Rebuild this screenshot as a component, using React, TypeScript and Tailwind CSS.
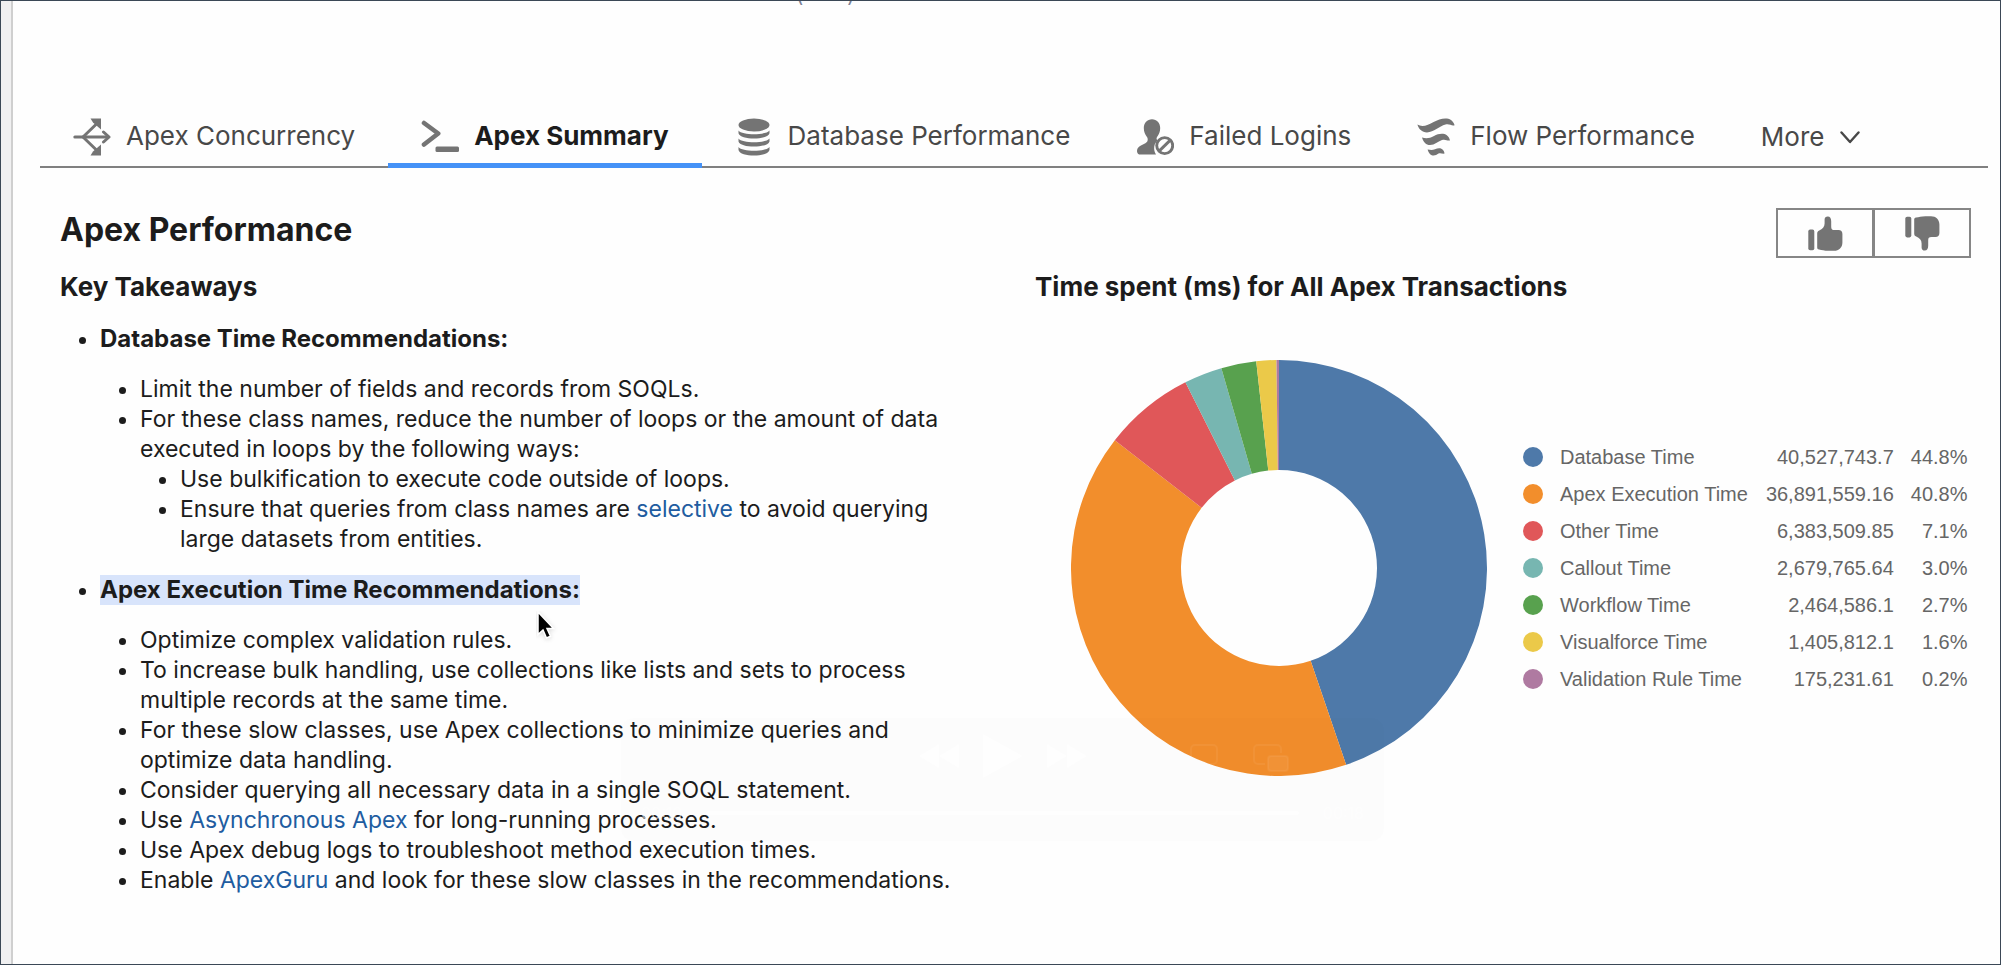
import type { ReactNode } from "react";

const ICON = "mt-[3px] h-[38px] w-[38px] shrink-0 text-[#747474]";

function ConcurrencyIcon() {
  return (
    <svg className={ICON} viewBox="0 0 38 38" fill="none" stroke="currentColor" strokeWidth="3" aria-hidden="true">
      <path d="M1.8 19H35" strokeLinecap="round" />
      <path d="M30.500 14L36 19L30.500 24" strokeLinecap="round" strokeLinejoin="round" />
      <path d="M10 19L25 4.500M10 19L25 33.500" />
      <path d="M17.500 0.500H28V11.500L24 8L20 4.500Z" fill="currentColor" stroke="none" />
      <path d="M17.500 37.500H28V26.500L24 30L20 33.500Z" fill="currentColor" stroke="none" />
    </svg>
  );
}

function SummaryIcon() {
  return (
    <svg className={ICON} viewBox="0 0 38 38" fill="none" stroke="currentColor" aria-hidden="true">
      <path d="M3 5L17.200 15.500L3 26.500" strokeWidth="4.600" strokeLinecap="round" strokeLinejoin="round" />
      <rect x="14.500" y="28.500" width="23.500" height="5.500" rx="1.500" fill="currentColor" stroke="none" />
    </svg>
  );
}

function DatabaseIcon() {
  return (
    <svg className={ICON} viewBox="0 0 38 38" fill="currentColor" aria-hidden="true">
      <ellipse cx="19" cy="7" rx="15.5" ry="6.4" />
      <path d="M3.500 12.400C7 17.400 31 17.400 34.500 12.400V15.200C33 22.200 5 22.200 3.500 15.200Z" />
      <path d="M3.500 20.600C7 25.600 31 25.600 34.500 20.600V23.400C33 30.200 5 30.200 3.500 23.400Z" />
      <path d="M3.500 29C7 34 31 34 34.500 29V32C33 39.400 5 39.400 3.500 32Z" />
    </svg>
  );
}

function FailedLoginsIcon() {
  return (
    <svg className={ICON} viewBox="0 0 38 38" fill="currentColor" aria-hidden="true">
      <path d="M16 1.2C20.8 1.2 24.2 5 24.2 10C24.2 13.8 22.8 16.6 21.2 18.8C20.2 20.2 20.4 21.6 21.6 22.4C18 25.4 16.8 31 20 36.6H4.5C2.4 36.6 1 35.2 1 33.2C1 28.6 5.4 27.2 9.4 25.2C12 24 12.4 20.8 10.8 18.8C9.2 16.6 7.8 13.8 7.8 10C7.8 5 11.2 1.2 16 1.2Z" />
      <circle cx="28.7" cy="27.6" r="8" fill="none" stroke="currentColor" strokeWidth="2.9" />
      <path d="M23.6 32.6L33.8 22.6" stroke="currentColor" strokeWidth="2.9" />
    </svg>
  );
}

function FlowIcon() {
  return (
    <svg className={ICON} viewBox="0 0 38 38" fill="currentColor" aria-hidden="true">
      <path d="M.4 6.600C5 9.400 11 7.400 16.600 4C24.400-.6 35-2 37.600 7.200C34.600 8.200 32.500 5.600 28.500 6.600C22 8.200 17 14.400 10 14.400C5 14.400 1.500 11 .4 6.600Z" />
      <path d="M5 19.400C9 20.800 12.500 20.400 17 18C23 14.800 31 14.400 33 22.400C30 23 28.500 20.800 25 22C20.500 23.600 18 27 13 27C9 27 6.500 24 5 19.400Z" />
      <path d="M10.600 31.400C13.500 32 15.500 32.200 18 31.200C22 29.600 26.500 29.600 27.600 35.600C25 36 23.500 34.600 21.500 35.600C17.500 38.600 12.600 38.600 10.600 31.400Z" />
    </svg>
  );
}

function ThumbIcon({ down = false }: { down?: boolean }) {
  return (
    <svg
      className={down ? "h-[35px] w-[35px] -scale-y-100 text-[#747474]" : "h-[35px] w-[35px] text-[#747474]"}
      viewBox="0 0 35 35"
      fill="currentColor"
      aria-hidden="true"
    >
      <rect x="0.300" y="13.600" width="6" height="20.600" rx="1.800" />
      <path d="M9.200 17.500C9.200 16 9.800 15 11.200 14.400C14.500 13 16.600 11 16.600 7.500V3.600C16.600 1.600 17.800.4 19.800.4C22 .4 23.200 2.400 23.200 5.200V10.400C23.200 13.200 24 14 26.500 14H30.500C33 14 34.400 15.600 34.400 18V26.500C34.400 31.500 31 34.800 26 34.800H20.500C16 34.800 14 33.800 11 33.400C9.800 33.200 9.200 32.600 9.200 31.400Z" />
    </svg>
  );
}

const tabs: { label: string; icon: ReactNode; active?: boolean }[] = [
  { label: "Apex Concurrency", icon: <ConcurrencyIcon /> },
  { label: "Apex Summary", icon: <SummaryIcon />, active: true },
  { label: "Database Performance", icon: <DatabaseIcon /> },
  { label: "Failed Logins", icon: <FailedLoginsIcon /> },
  { label: "Flow Performance", icon: <FlowIcon /> },
];

const slices = [
  { name: "Database Time", value: 40527743.7, text: "40,527,743.7", pct: "44.8%", color: "#4e79a9" },
  { name: "Apex Execution Time", value: 36891559.16, text: "36,891,559.16", pct: "40.8%", color: "#f28e2c" },
  { name: "Other Time", value: 6383509.85, text: "6,383,509.85", pct: "7.1%", color: "#e05759" },
  { name: "Callout Time", value: 2679765.64, text: "2,679,765.64", pct: "3.0%", color: "#77b6b1" },
  { name: "Workflow Time", value: 2464586.1, text: "2,464,586.1", pct: "2.7%", color: "#58a14e" },
  { name: "Visualforce Time", value: 1405812.1, text: "1,405,812.1", pct: "1.6%", color: "#ebc949" },
  { name: "Validation Rule Time", value: 175231.61, text: "175,231.61", pct: "0.2%", color: "#af7aa1" },
];

function Donut() {
  const total = slices.reduce((sum, s) => sum + s.value, 0);
  const c = 208;
  const outer = 208;
  const inner = 98;
  const point = (r: number, turn: number) => {
    const a = turn * 2 * Math.PI;
    return `${(c + r * Math.sin(a)).toFixed(2)} ${(c - r * Math.cos(a)).toFixed(2)}`;
  };
  let start = 0;
  return (
    <svg className="h-[416px] w-[416px] shrink-0" viewBox="0 0 416 416" role="img" aria-label="Time spent by category">
      {slices.map((s) => {
        const from = start;
        const to = start + s.value / total;
        start = to;
        const large = to - from > 0.5 ? 1 : 0;
        return (
          <path
            key={s.name}
            fill={s.color}
            d={`M${point(outer, from)}A${outer} ${outer} 0 ${large} 1 ${point(outer, to)}L${point(inner, to)}A${inner} ${inner} 0 ${large} 0 ${point(inner, from)}Z`}
          />
        );
      })}
    </svg>
  );
}

function Legend() {
  return (
    <table className="font-['Liberation_Sans',Arial,sans-serif] text-[20px] leading-[37px] whitespace-nowrap text-[#666]">
      <tbody>
        {slices.map((s) => (
          <tr key={s.name}>
            <td className="p-0 pr-[17px]">
              <span className="block h-5 w-5 rounded-full" style={{ backgroundColor: s.color }} />
            </td>
            <th scope="row" className="p-0 text-left font-normal">{s.name}</th>
            <td className="p-0 pl-[18px] text-right">{s.text}</td>
            <td className="p-0 pl-[17px] text-right">{s.pct}</td>
          </tr>
        ))}
      </tbody>
    </table>
  );
}

function TextLink({ children }: { children: ReactNode }) {
  return (
    <a href="#" className="text-[#215ca0]">
      {children}
    </a>
  );
}

function PlayerOverlay() {
  return (
    <div className="pointer-events-none absolute top-[717px] left-[620px] flex h-[123px] w-[763px] flex-col justify-between rounded-xl bg-black/[0.008] px-5 pt-4 pb-4 text-white/60" aria-hidden="true">
      <div className="flex items-center justify-center gap-6">
        <svg className="h-6 w-10" viewBox="0 0 40 24" fill="currentColor"><path d="M20 0V24L0 12ZM40 0V24L20 12Z" /></svg>
        <svg className="h-11 w-10" viewBox="0 0 40 44" fill="currentColor"><path d="M0 0L40 22L0 44Z" /></svg>
        <svg className="h-6 w-10" viewBox="0 0 40 24" fill="currentColor"><path d="M0 0V24L20 12ZM20 0V24L40 12Z" /></svg>
      </div>
      <div className="flex items-center gap-6 text-base">
        <span>00:10</span>
        <span className="h-1 flex-1 rounded bg-white/60" />
        <span>00:18</span>
      </div>
      <svg className="absolute top-[26px] left-[632px] h-7 w-9 text-white/5" viewBox="0 0 36 28" fill="none" stroke="currentColor" strokeWidth="2">
        <path d="M12 20H5A4 4 0 0 1 1 16V5A4 4 0 0 1 5 1H24A4 4 0 0 1 28 5V9" />
        <rect x="15" y="12" width="20" height="15" rx="3" fill="currentColor" />
      </svg>
      <svg className="absolute top-[26px] left-[569px] h-7 w-7 text-white/5" viewBox="0 0 28 28" fill="none" stroke="currentColor" strokeWidth="2">
        <path d="M9 20H5A4 4 0 0 1 1 16V5A4 4 0 0 1 5 1H23A4 4 0 0 1 27 5V16A4 4 0 0 1 23 20H19M14 18L7 26H21Z" />
      </svg>
    </div>
  );
}

export default function App() {
  return (
    <div className="relative flex min-h-screen overflow-hidden border border-[#3b4856] bg-[#fefefe] font-[Inter,sans-serif] text-[#1c1c1c]">
      <div className="w-3 shrink-0 border-r-2 border-[#cfcfcf] bg-[#f0f0f1]" />
      <main className="min-w-0 flex-1 pr-3 pl-[27px]">
        <div className="flex h-1 items-end gap-11 overflow-hidden pl-[756px] text-[20px] leading-none text-[#7b8296]">
          <span>(</span>
          <span>)</span>
        </div>
        <nav className="mt-[98px] flex h-[65px] border-b-2 border-[#808080]" role="tablist">
          {tabs.map((t) => (
            <button
              key={t.label}
              type="button"
              role="tab"
              aria-selected={!!t.active}
              className={
                t.active
                  ? "-mb-[2px] flex items-center gap-[15px] border-b-[5px] border-[#4592f7] px-[33px] pt-3 pb-[7px] text-[26px] font-bold whitespace-nowrap text-[#1c1c1c]"
                  : "-mb-[2px] flex items-center gap-[15px] px-[33px] pt-3 pb-3 text-[26px] whitespace-nowrap text-[#484848]"
              }
            >
              {t.icon}
              {t.label}
            </button>
          ))}
          <button type="button" className="flex items-center gap-4 px-[33px] pt-[10px] pb-[6px] text-[26px] text-[#484848]">
            More
            <svg className="h-5 w-5" viewBox="0 0 20 20" fill="none" stroke="currentColor" strokeWidth="2.4" strokeLinecap="round" strokeLinejoin="round" aria-hidden="true">
              <path d="M1.500 5.500L10 15L18.500 5.500" />
            </svg>
          </button>
        </nav>

        <div className="pr-[17px] pl-5">
          <header className="flex h-[101px] items-start justify-between pt-10">
            <h1 className="text-[32px] leading-[44px] font-bold">Apex Performance</h1>
            <div className="flex">
              <button type="button" aria-label="Helpful" className="flex h-[50px] w-[98px] items-center justify-center border-2 border-[#868686]">
                <ThumbIcon />
              </button>
              <button type="button" aria-label="Not helpful" className="-ml-px flex h-[50px] w-[98px] items-center justify-center border-2 border-[#868686]">
                <ThumbIcon down />
              </button>
            </div>
          </header>

          <div className="grid grid-cols-[975fr_936fr]">
            <section className="pr-14">
              <h2 className="text-[26px] leading-9 font-bold">Key Takeaways</h2>
              <ul className="mt-[19px] list-disc pl-10 text-[23px] leading-[30px]">
                <li>
                  <strong className="text-[24px]">Database Time Recommendations:</strong>
                  <ul className="mt-5 list-disc pl-10">
                    <li>Limit the number of fields and records from SOQLs.</li>
                    <li>
                      For these class names, reduce the number of loops or the amount of data executed in loops by the following ways:
                      <ul className="list-disc pl-10">
                        <li>Use bulkification to execute code outside of loops.</li>
                        <li>
                          Ensure that queries from class names are <TextLink>selective</TextLink> to avoid querying large datasets from entities.
                        </li>
                      </ul>
                    </li>
                  </ul>
                </li>
                <li className="relative mt-[21px]">
                  <strong className="inline-block bg-[#d8e4fb] text-[24px]">Apex Execution Time Recommendations:</strong>
                  <svg className="absolute top-9 left-[436px] h-8 w-6" viewBox="0 0 24 32" aria-hidden="true">
                    <path d="M2 1V23.500L7 19L10.500 27L14.500 25.300L11 17.500H17.500Z" fill="#000" stroke="#fff" strokeWidth="1.500" className="drop-shadow-sm" />
                  </svg>
                  <ul className="mt-5 list-disc pl-10">
                    <li>Optimize complex validation rules.</li>
                    <li>To increase bulk handling, use collections like lists and sets to process multiple records at the same time.</li>
                    <li>For these slow classes, use Apex collections to minimize queries and optimize data handling.</li>
                    <li>Consider querying all necessary data in a single SOQL statement.</li>
                    <li>
                      Use <TextLink>Asynchronous Apex</TextLink> for long-running processes.
                    </li>
                    <li>Use Apex debug logs to troubleshoot method execution times.</li>
                    <li>
                      Enable <TextLink>ApexGuru</TextLink> and look for these slow classes in the recommendations.
                    </li>
                  </ul>
                </li>
              </ul>
            </section>

            <section>
              <h2 className="text-[26px] leading-9 font-bold">Time spent (ms) for All Apex Transactions</h2>
              <div className="mt-[55px] flex items-center gap-9 pl-9">
                <Donut />
                <Legend />
              </div>
            </section>
          </div>
        </div>
      </main>
      <PlayerOverlay />
    </div>
  );
}
